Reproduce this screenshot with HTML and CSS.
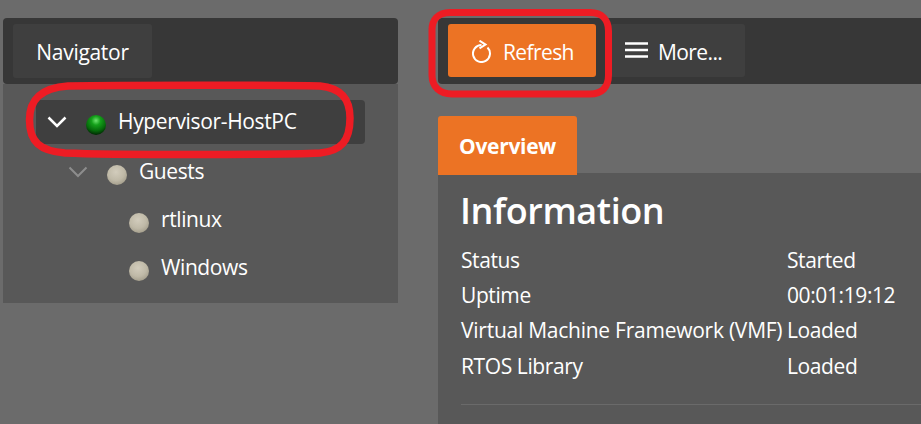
FILE: index.html
```html
<!DOCTYPE html>
<html lang="en">
<head>
<meta charset="utf-8">
<title>Hypervisor Overview</title>
<link rel="stylesheet" href="styles.css">
</head>
<body>
<svg width="0" height="0" class="defs">
  <defs>
    <radialGradient id="green" cx="50%" cy="28%" r="75%">
      <stop offset="0" stop-color="#6ee46e"/>
      <stop offset="0.3" stop-color="#14a01a"/>
      <stop offset="0.68" stop-color="#066a0b"/>
      <stop offset="1" stop-color="#001c02"/>
    </radialGradient>
    <radialGradient id="grey" cx="45%" cy="35%" r="70%">
      <stop offset="0" stop-color="#d2ccbc"/>
      <stop offset="0.6" stop-color="#bfb9a7"/>
      <stop offset="1" stop-color="#a09a88"/>
    </radialGradient>
  </defs>
</svg>
<aside class="sidebar">
  <div class="toolbar">
    <div class="nav-tab">Navigator</div>
  </div>
  <ul class="tree">
    <li class="tree-row host">
      <svg class="chevron" viewBox="0 0 20 12"><path d="M1.500 1.500 10 10l8.500-8.500"/></svg>
      <svg class="ball" viewBox="0 0 20 20"><circle cx="10" cy="10" r="10" fill="url(#green)"/></svg>
      <span class="host-label">Hypervisor-HostPC</span>
    </li>
    <li class="tree-row guests">
      <svg class="chevron dim" viewBox="0 0 20 12"><path d="M1.500 1.500 10 10l8.500-8.500"/></svg>
      <svg class="ball" viewBox="0 0 20 20"><circle cx="10" cy="10" r="10" fill="url(#grey)"/></svg>
      <span>Guests</span>
    </li>
    <li class="tree-row leaf">
      <svg class="ball" viewBox="0 0 20 20"><circle cx="10" cy="10" r="10" fill="url(#grey)"/></svg>
      <span>rtlinux</span>
    </li>
    <li class="tree-row leaf">
      <svg class="ball" viewBox="0 0 20 20"><circle cx="10" cy="10" r="10" fill="url(#grey)"/></svg>
      <span>Windows</span>
    </li>
  </ul>
</aside>
<main class="main">
  <div class="toolbar actions">
    <button class="btn primary">
      <svg class="icon" viewBox="0 0 19 23"><path d="M9.500 5A8.500 8.500 0 1 0 15.500 7.500"/><path d="M7.500 0.700 13.500 4.600 7.500 8.300"/></svg>
      <span>Refresh</span>
    </button>
    <button class="btn more">
      <svg class="icon menu" viewBox="0 0 23 16"><path d="M0 1.500h23M0 8h23M0 14.500h23"/></svg>
      <span>More...</span>
    </button>
  </div>
  <div class="tabs"><div class="tab">Overview</div></div>
  <section class="content">
    <h1>Information</h1>
    <dl class="info">
      <dt>Status</dt><dd>Started</dd>
      <dt>Uptime</dt><dd>00:01:19:12</dd>
      <dt>Virtual Machine Framework (VMF)</dt><dd>Loaded</dd>
      <dt>RTOS Library</dt><dd>Loaded</dd>
    </dl>
    <hr class="rule">
  </section>
</main>
<svg class="callouts" width="921" height="424" viewBox="0 0 921 424">
  <path class="oval" d="M68 86C120 85 280 85 320 86 340 88 350 98 350 118 350 141 341 151 320 153 280 155 110 155 65 153 40 151 29.500 142 29.500 120 29.500 100 40 88 68 86Z"/>
  <path d="M450 12.500H590C602 12.500 608.500 20 608.500 31V75C608.500 87 602 94 590 94H452C440 94 432 87 432 75V30C432 20 438 12.500 450 12.500Z"/>
</svg>
</body>
</html>
```
FILE: styles.css
```css
* { box-sizing: border-box; }
html, body { height: 100%; }
body {
  margin: 0;
  height: 424px;
  overflow: hidden;
  background: #6b6b6b;
  color: #fff;
  font-family: "Open Sans", "Noto Sans", sans-serif;
  font-size: 21px;
  display: flex;
  gap: 40px;
  padding: 18px 0 0 3px;
  position: relative;
}
.defs { position: absolute; }
.sidebar { width: 395px; flex: none; }
.toolbar {
  height: 66px;
  background: #373737;
  border-radius: 4px;
  padding: 6px 10px;
  display: flex;
}
.nav-tab {
  width: 139px;
  background: #3f3f3f;
  border-radius: 3px;
  padding-top: 1px;
  display: flex;
  align-items: center;
  justify-content: center;
  letter-spacing: -0.3px;
}
.tree {
  list-style: none;
  margin: 0;
  padding: 16px 0 11px;
  background: #585858;
}
.tree-row {
  height: 48px;
  display: flex;
  align-items: center;
  letter-spacing: -0.4px;
}
.tree-row span { position: relative; bottom: 1px; }
.ball { width: 20px; height: 20px; flex: none; margin-top: 5px; }
.chevron {
  width: 20px;
  height: 12px;
  flex: none;
  fill: none;
  stroke: #fff;
  stroke-width: 2.500;
}
.chevron.dim { stroke: #8d8d8d; stroke-width: 2; }
.host {
  height: 44px;
  margin: 0 33px 4px 33px;
  padding-left: 11px;
  background: #3f3f3f;
  border-radius: 4px;
}
.host .ball { margin-left: 18.500px; }
.host-label { margin-left: 12.500px; letter-spacing: -0.35px; }
.guests { padding-left: 65px; }
.guests .ball { margin-left: 19px; }
.guests span { margin-left: 12px; }
.leaf { padding-left: 126px; }
.leaf span { margin-left: 12px; }
.main { flex: 1; min-width: 0; }
.actions { border-radius: 4px 0 0 4px; gap: 14px; }
.btn {
  height: 53px;
  border: 0;
  border-radius: 3px;
  color: #fff;
  font: inherit;
  letter-spacing: -0.6px;
  display: flex;
  align-items: center;
  padding: 1px 0 0;
}
.btn span { position: relative; top: 1px; }
.primary { width: 148px; background: #ec7324; padding-left: 24px; gap: 12px; }
.more { width: 135px; background: #3f3f3f; padding-left: 15px; gap: 10px; }
.icon {
  width: 19px;
  height: 23px;
  flex: none;
  fill: none;
  stroke: #fff;
  stroke-width: 2;
}
.primary .icon { margin-top: 1px; }
.menu { width: 23px; height: 16px; stroke-width: 2.500; margin-bottom: 2px; }
.tabs { margin-top: 32px; height: 57px; position: relative; z-index: 1; }
.tab {
  width: 139px;
  height: 59px;
  background: #ec7324;
  border-radius: 3px 3px 0 0;
  font-weight: 700;
  letter-spacing: -0.3px;
  display: flex;
  align-items: center;
  justify-content: center;
}
.content {
  height: 251px;
  background: #585858;
  padding: 14px 0 0 23px;
}
h1 {
  margin: 0 0 0 -1px;
  font-size: 36px;
  line-height: 48px;
  font-weight: 600;
  letter-spacing: -0.4px;
}
.info {
  display: grid;
  grid-template-columns: 326px 1fr;
  grid-auto-rows: 35.300px;
  margin: 7px 0 0;
  align-items: center;
  letter-spacing: -0.4px;
}
dt, dd { margin: 0; white-space: nowrap; }
dt:nth-of-type(3) { letter-spacing: -0.25px; }
.rule {
  border: 0;
  border-top: 1px solid #6a6a6a;
  margin: 21px 0 0;
}
.callouts {
  position: absolute;
  left: 0;
  top: 0;
  pointer-events: none;
  fill: none;
  stroke: #ed1c24;
  stroke-width: 7;
}
.callouts .oval { stroke-width: 7.500; }
```
